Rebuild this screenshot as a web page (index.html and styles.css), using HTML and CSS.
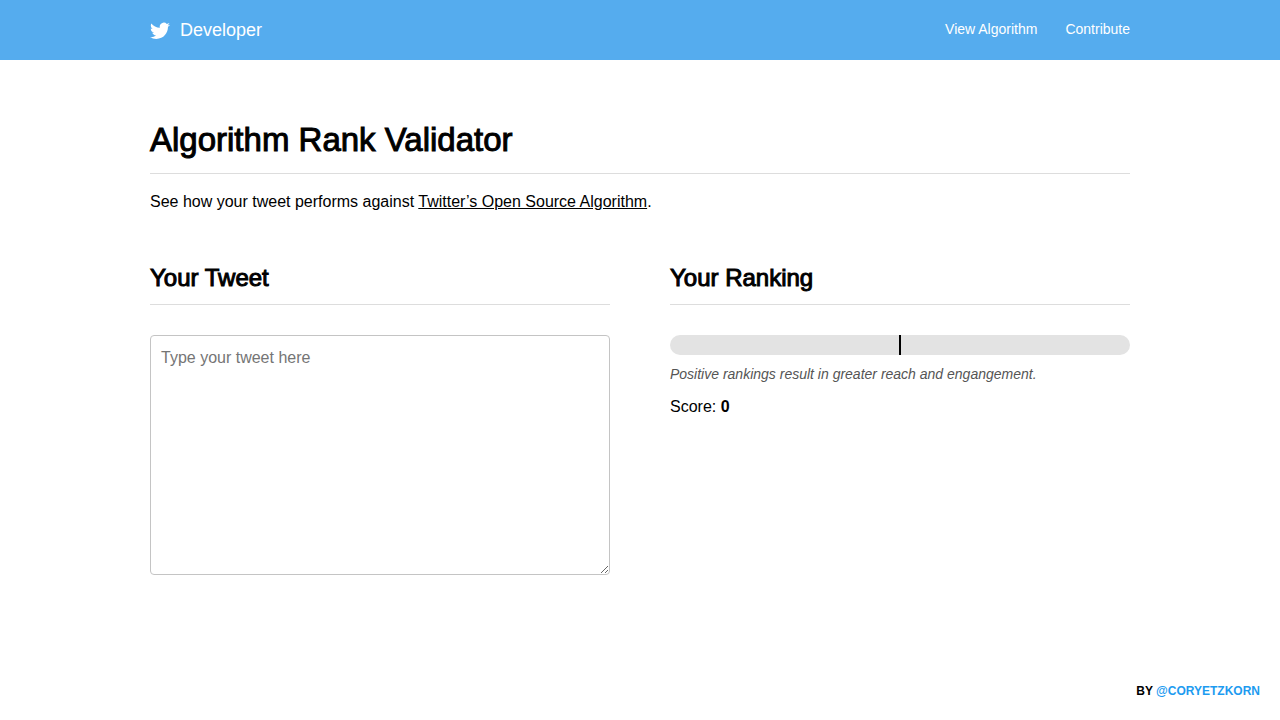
FILE: index.html
```html
<!DOCTYPE html>
<html lang="en">
<head>
    <meta charset="utf-8">
    <title>Algorithm Rank Validator</title>
    <link rel="stylesheet" href="styles.css">
</head>
<body>
    <header class="header">
        <div class="container header-inner">
            <a class="logo" href="#">
                <svg width="20" height="20" viewBox="0 -1 24 24" fill="currentColor" aria-hidden="true">
                    <path d="M23.953 4.57a10 10 0 01-2.825.775 4.958 4.958 0 002.163-2.723c-.951.555-2.005.959-3.127 1.184a4.92 4.92 0 00-8.384 4.482C7.69 8.095 4.067 6.13 1.64 3.162a4.822 4.822 0 00-.666 2.475c0 1.71.87 3.213 2.188 4.096a4.904 4.904 0 01-2.228-.616v.06a4.923 4.923 0 003.946 4.827 4.996 4.996 0 01-2.212.085 4.936 4.936 0 004.604 3.417 9.867 9.867 0 01-6.102 2.105c-.39 0-.779-.023-1.17-.067a13.995 13.995 0 007.557 2.209c9.053 0 13.998-7.496 13.998-13.985 0-.21 0-.42-.015-.63A9.935 9.935 0 0024 4.59z"/>
                </svg>
                <span>Developer</span>
            </a>
            <nav class="nav">
                <a href="#">View Algorithm</a>
                <a href="#">Contribute</a>
            </nav>
        </div>
    </header>

    <main class="container main">
        <h1>Algorithm Rank Validator</h1>
        <p class="intro">See how your tweet performs against <a href="#">Twitter’s Open Source Algorithm</a>.</p>
        <div class="columns">
            <section>
                <h2><label for="tweet">Your Tweet</label></h2>
                <textarea id="tweet" class="tweet" placeholder="Type your tweet here"></textarea>
            </section>
            <section>
                <h2>Your Ranking</h2>
                <div class="meter"><div class="meter-center"></div></div>
                <p class="hint">Positive rankings result in greater reach and engangement.</p>
                <p class="score">Score: <strong>0</strong></p>
            </section>
        </div>
    </main>

    <footer class="credit">By <a href="#">@coryetzkorn</a></footer>
</body>
</html>
```

FILE: styles.css
```css
* {
    box-sizing: border-box;
}

body {
    margin: 0;
    min-height: 100vh;
    display: flex;
    flex-direction: column;
    font-family: "Liberation Sans", Arial, sans-serif;
    font-size: 16px;
    line-height: 20px;
    color: #000;
    background: #fff;
}

.container {
    width: 100%;
    max-width: 1020px;
    margin: 0 auto;
    padding: 0 20px;
}

.header {
    background: #55acee;
    color: #fff;
}

.header-inner {
    display: flex;
    align-items: center;
    justify-content: space-between;
    min-height: 60px;
}

.header a {
    color: inherit;
    text-decoration: none;
}

.logo {
    display: flex;
    align-items: center;
    gap: 10px;
    font-size: 18px;
}

.nav {
    display: flex;
    gap: 28px;
    padding-bottom: 2px;
    font-size: 14px;
}

.main {
    flex: 1;
    padding-top: 60px;
}

h1,
h2 {
    margin: 0;
    font-weight: 500;
    border-bottom: 1px solid #ddd;
    -webkit-text-stroke: 1px #000;
}

h1 {
    padding-bottom: 13px;
    font-size: 33px;
    line-height: 40px;
}

h2 {
    margin-bottom: 30px;
    padding-bottom: 12px;
    font-size: 24px;
    line-height: 28px;
}

.intro {
    margin: 18px 0 52px;
}

.intro a {
    color: inherit;
}

.columns {
    display: grid;
    grid-template-columns: 1fr 1fr;
    gap: 60px;
}

.tweet {
    display: block;
    width: 100%;
    height: 240px;
    padding: 12px 10px;
    border: 1px solid #c4c4c4;
    border-radius: 4px;
    font: inherit;
    resize: both;
}

.tweet::placeholder {
    color: #757575;
}

.meter {
    display: flex;
    justify-content: center;
    height: 20px;
    border-radius: 10px;
    background: #e3e3e3;
}

.meter-center {
    width: 2px;
    background: #000;
}

.hint {
    margin: 9px 0 13px;
    font-size: 14px;
    font-style: italic;
    color: #555;
}

.score {
    margin: 0;
}

.credit {
    padding: 20px;
    font-size: 12px;
    font-weight: bold;
    line-height: 18px;
    text-align: right;
    text-transform: uppercase;
}

.credit a {
    color: #1d9bf0;
    text-decoration: none;
}
```
